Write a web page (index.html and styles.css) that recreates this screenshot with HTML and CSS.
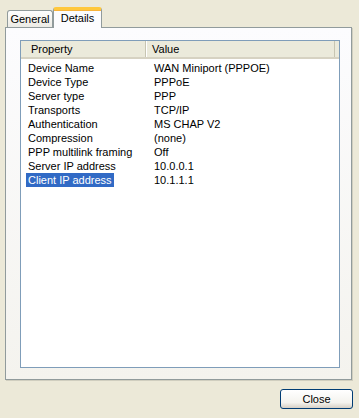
FILE: index.html
```html
<!DOCTYPE html>
<html lang="en">
<head>
    <meta charset="UTF-8">
    <title>Connection Status</title>
    <link rel="stylesheet" href="styles.css">
</head>
<body>

<div class="dialog">
    <div class="tabs">
        <div class="tab">General</div>
        <div class="tab active">Details</div>
    </div>

    <div class="panel">
        <div class="list">
            <div class="list-head">
                <div class="col-prop">Property</div>
                <div class="col-val">Value</div>
                <div class="col-rest"></div>
            </div>
            <div class="list-body">
                <div class="row"><div class="cell-prop"><span>Device Name</span></div><div class="cell-val">WAN Miniport (PPPOE)</div></div>
                <div class="row"><div class="cell-prop"><span>Device Type</span></div><div class="cell-val">PPPoE</div></div>
                <div class="row"><div class="cell-prop"><span>Server type</span></div><div class="cell-val">PPP</div></div>
                <div class="row"><div class="cell-prop"><span>Transports</span></div><div class="cell-val">TCP/IP</div></div>
                <div class="row"><div class="cell-prop"><span>Authentication</span></div><div class="cell-val">MS CHAP V2</div></div>
                <div class="row"><div class="cell-prop"><span>Compression</span></div><div class="cell-val">(none)</div></div>
                <div class="row"><div class="cell-prop"><span>PPP multilink framing</span></div><div class="cell-val">Off</div></div>
                <div class="row"><div class="cell-prop"><span>Server IP address</span></div><div class="cell-val">10.0.0.1</div></div>
                <div class="row selected"><div class="cell-prop"><span>Client IP address</span></div><div class="cell-val">10.1.1.1</div></div>
            </div>
        </div>
    </div>
</div>

<div class="footer">
    <button class="btn">Close</button>
</div>

</body>
</html>
```

FILE: styles.css
```css
body {
    margin: 0;
    width: 359px;
    height: 418px;
    background-color: #ece9d8;
    font-family: 'Liberation Sans', Arial, sans-serif;
    font-size: 11px;
    color: #000;
    overflow: hidden;
}

.dialog {
    padding: 7px 7px 0 5px;
}

.tabs {
    display: flex;
    align-items: flex-end;
    height: 21px;
    padding-left: 2px;
    margin-bottom: -1px;
}

.tab {
    box-sizing: border-box;
    width: 46px;
    height: 17px;
    margin-bottom: 1px;
    border: 1px solid #919b9c;
    border-bottom: none;
    border-radius: 3px 3px 0 0;
    background: linear-gradient(#fefefe, #f4f3ee 60%, #ecebe6);
    text-align: center;
    line-height: 16px;
}

.tab.active {
    position: relative;
    z-index: 1;
    width: 49px;
    height: 21px;
    margin-bottom: 0;
    margin-left: 0;
    border-top: 3px solid #ffc83c;
    box-shadow: inset 0 1px 0 #f8b33a;
    background: #fcfcfe;
    line-height: 16px;
}

.panel {
    box-sizing: border-box;
    height: 353px;
    padding: 12px 11px 11px 14px;
    border: 1px solid #919b9c;
    box-shadow: 1px 1px 0 #d0cebf;
    background: linear-gradient(#fcfcfe, #f4f3ee);
}

.list {
    box-sizing: border-box;
    height: 328px;
    border: 1px solid #7f9db9;
    background: #fff;
}

.list-head {
    display: flex;
    height: 16px;
    background: #ebeadb;
    border-bottom: 2px solid #d6d2c2;
    line-height: 16px;
}

.col-prop {
    width: 125px;
    padding-left: 10px;
    box-sizing: border-box;
    border-right: 1px solid #c7c5b2;
    box-shadow: 1px 0 0 #fff;
    margin: 0 0 0 0;
}

.col-val {
    width: 189px;
    padding-left: 6px;
    box-sizing: border-box;
    border-right: 1px solid #c7c5b2;
}

.col-rest {
    flex: 1;
}

.list-body {
    padding-top: 2px;
}

.row {
    display: flex;
    height: 14px;
    line-height: 14px;
}

.cell-prop {
    width: 126px;
    padding-left: 5px;
    box-sizing: border-box;
}

.cell-prop span {
    display: inline-block;
    padding: 0 2px;
}

.row.selected .cell-prop span {
    background: #316ac5;
    color: #fff;
}

.cell-val {
    padding-left: 7px;
}

.footer {
    display: flex;
    justify-content: flex-end;
    padding: 9px 6px 0 0;
}

.btn {
    width: 73px;
    height: 20px;
    padding: 0;
    border: 1px solid #003c74;
    border-radius: 3px;
    background: linear-gradient(#ffffff, #f4f3ee 70%, #d6d0c5);
    font-family: 'Liberation Sans', Arial, sans-serif;
    font-size: 11px;
    color: #000;
}
```
